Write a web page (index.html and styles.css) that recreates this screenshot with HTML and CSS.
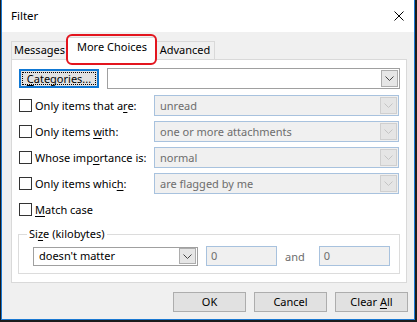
FILE: index.html
```html
<!DOCTYPE html>
<html>
<head>
<meta charset="utf-8">
<link rel="stylesheet" href="styles.css">
</head>
<body>
<div class="frame">
  <div class="window">
    <div class="titlebar">
      <span class="title">Filter</span>
      <svg class="close" width="10" height="10" viewBox="0 0 10 10"><path d="M0.5 0.5L9.5 9.5M9.5 0.5L0.5 9.5" stroke="#000" stroke-width="1" fill="none"/></svg>
    </div>
    <div class="body">
      <div class="tabs">
        <div class="tab t-msg">Messages</div>
        <div class="tab active">More Choices</div>
        <div class="tab t-adv">Advanced</div>
        <div class="highlight"></div>
      </div>
      <div class="panel">
        <div class="catrow">
          <div class="btn focus"><span class="focusbox"><span><u>C</u>ategories...</span></span></div>
          <div class="combo cat"><span class="val"></span><span class="arrow"><svg width="9" height="5" viewBox="0 0 9 5"><path d="M0.5 0.5L4.5 4.5L8.5 0.5" stroke="#444" fill="none"/></svg></span></div>
        </div>
        <div class="row">
          <label class="chk"><span class="box"></span><span class="lbl">Only items that a<u>r</u>e:</span></label>
          <div class="combo dis"><span class="val">unread</span><span class="arrow"><svg width="9" height="5" viewBox="0 0 9 5"><path d="M0.5 0.5L4.5 4.5L8.5 0.5" stroke="#c4c4c4" fill="none"/></svg></span></div>
        </div>
        <div class="row">
          <label class="chk"><span class="box"></span><span class="lbl">Only items <u>w</u>ith:</span></label>
          <div class="combo dis"><span class="val">one or more attachments</span><span class="arrow"><svg width="9" height="5" viewBox="0 0 9 5"><path d="M0.5 0.5L4.5 4.5L8.5 0.5" stroke="#c4c4c4" fill="none"/></svg></span></div>
        </div>
        <div class="row">
          <label class="chk"><span class="box"></span><span class="lbl">Whose imp<u>o</u>rtance is:</span></label>
          <div class="combo dis"><span class="val">normal</span><span class="arrow"><svg width="9" height="5" viewBox="0 0 9 5"><path d="M0.5 0.5L4.5 4.5L8.5 0.5" stroke="#c4c4c4" fill="none"/></svg></span></div>
        </div>
        <div class="row">
          <label class="chk"><span class="box"></span><span class="lbl">Only items whic<u>h</u>:</span></label>
          <div class="combo dis"><span class="val">are flagged by me</span><span class="arrow"><svg width="9" height="5" viewBox="0 0 9 5"><path d="M0.5 0.5L4.5 4.5L8.5 0.5" stroke="#c4c4c4" fill="none"/></svg></span></div>
        </div>
        <div class="row">
          <label class="chk"><span class="box"></span><span class="lbl"><u>M</u>atch case</span></label>
        </div>
        <fieldset class="group">
          <legend>Si<u>z</u>e (kilobytes)</legend>
          <div class="sizerow">
            <div class="combo size"><span class="val">doesn't matter</span><span class="arrow"><svg width="9" height="5" viewBox="0 0 9 5"><path d="M0.5 0.5L4.5 4.5L8.5 0.5" stroke="#444" fill="none"/></svg></span></div>
            <div class="input">0</div>
            <span class="and">and</span>
            <div class="input">0</div>
          </div>
        </fieldset>
      </div>
      <div class="buttons">
        <div class="btn"><span>OK</span></div>
        <div class="btn"><span>Cancel</span></div>
        <div class="btn"><span>Clear <u>A</u>ll</span></div>
      </div>
    </div>
  </div>
</div>
</body>
</html>
```
FILE: styles.css
```css
* { box-sizing: border-box; }
html, body { margin: 0; padding: 0; }
body {
  font-family: "Noto Sans", "Open Sans", sans-serif;
  font-size: 11px;
  color: #000;
}
.frame {
  width: 417px;
  height: 322px;
  background: #1b1b1b;
  padding: 0 2px 2px 1px;
}
.window {
  width: 414px;
  height: 320px;
  border: 1px solid #1a78d2;
  border-top: none;
  background: #f0f0f0;
  display: flex;
  flex-direction: column;
}
.titlebar {
  height: 32px;
  background: #fff;
  display: flex;
  align-items: center;
  justify-content: space-between;
  padding: 0 10px 0 9px;
  flex: none;
}
.title { font-size: 11.5px; line-height: 16px; }
.close { display: block; }
.body {
  flex: 1;
  padding: 5px 0 0 9px;
  display: flex;
  flex-direction: column;
}
.tabs {
  position: relative;
  display: flex;
  align-items: flex-end;
  height: 22px;
  z-index: 1;
}
.tab {
  height: 18px;
  line-height: 16px;
  text-align: center;
  border: 1px solid #d9d9d9;
  border-bottom: none;
  background: #f0f0f0;
}
.t-msg { width: 57px; }
.t-adv { width: 59px; border-left: none; }
.tab.active {
  width: 89px;
  height: 23px;
  margin-bottom: -1px;
  margin-left: -1px;
  background: #fff;
  padding-top: 1px;
  border-right: none;
}
.highlight {
  position: absolute;
  left: 55px;
  top: -3px;
  width: 91px;
  height: 31px;
  border: 2px solid #e3151e;
  border-radius: 6px;
  pointer-events: none;
}
.panel {
  width: 396px;
  height: 224px;
  background: #fff;
  border: 1px solid #d9d9d9;
  padding: 8px 0 0 7px;
  display: flex;
  flex-direction: column;
}
.catrow {
  display: flex;
  align-items: flex-start;
  gap: 8px;
  height: 21px;
}
.btn {
  width: 73px;
  height: 20px;
  background: #e1e1e1;
  border: 1px solid #adadad;
  display: flex;
  align-items: center;
  justify-content: center;
  line-height: 16px;
}
.btn.focus {
  width: 80px;
  height: 19px;
  margin-top: 1px;
  border: 2px solid #0f78d4;
  padding: 1px;
}
.focusbox {
  display: flex;
  align-items: center;
  justify-content: center;
  width: 100%;
  height: 100%;
  border: 1px dotted #000;
  line-height: 13px;
}
.combo {
  height: 21px;
  display: flex;
  align-items: center;
  justify-content: space-between;
  border: 1px solid #a0a0a0;
  background: #fff;
  padding: 1px;
}
.combo .val { padding-left: 4px; line-height: 16px; white-space: nowrap; }
.combo .arrow {
  width: 17px;
  height: 17px;
  background: #e6e6e6;
  border: 1px solid #adadad;
  display: flex;
  align-items: center;
  justify-content: center;
}
.combo .arrow svg { display: block; }
.combo.cat { width: 293px; }
.combo.dis {
  width: 245px;
  background: #f0f0f0;
  border-color: #a8c2de;
  color: #6d6d6d;
}
.combo.dis .arrow { background: #e5e5e5; border-color: #cfcfcf; }
.row {
  display: flex;
  align-items: center;
  justify-content: space-between;
  height: 21px;
  margin-top: 5px;
  padding-right: 7px;
}
.catrow + .row { margin-top: 6px; }
.chk {
  display: flex;
  align-items: center;
  line-height: 16px;
  white-space: nowrap;
}
.chk .box {
  width: 13px;
  height: 13px;
  border: 1px solid #333;
  background: #fff;
  margin-right: 3px;
  flex: none;
}
u { text-decoration: underline; text-underline-offset: 2px; }
.group {
  margin: 6px 0 0 -1px;
  width: 382px;
  height: 48px;
  border: 1px solid #dcdcdc;
  padding: 0 0 0 14px;
}
.group legend {
  padding: 0 2px;
  margin-left: -6px;
  line-height: 16px;
}
.sizerow {
  display: flex;
  align-items: center;
  margin-top: 4px;
}
.combo.size { width: 165px; height: 19px; }
.combo.size .arrow { height: 16px; }
.input {
  width: 71px;
  height: 20px;
  border: 1px solid #a8c2de;
  background: #f0f0f0;
  color: #6d6d6d;
  padding-left: 4px;
  line-height: 17px;
  margin-left: 8px;
}
.and {
  color: #6d6d6d;
  margin: 0 6px 0 8px;
}
.buttons {
  display: flex;
  justify-content: flex-end;
  gap: 8px;
  padding-right: 6px;
  margin-top: 9px;
}
```
